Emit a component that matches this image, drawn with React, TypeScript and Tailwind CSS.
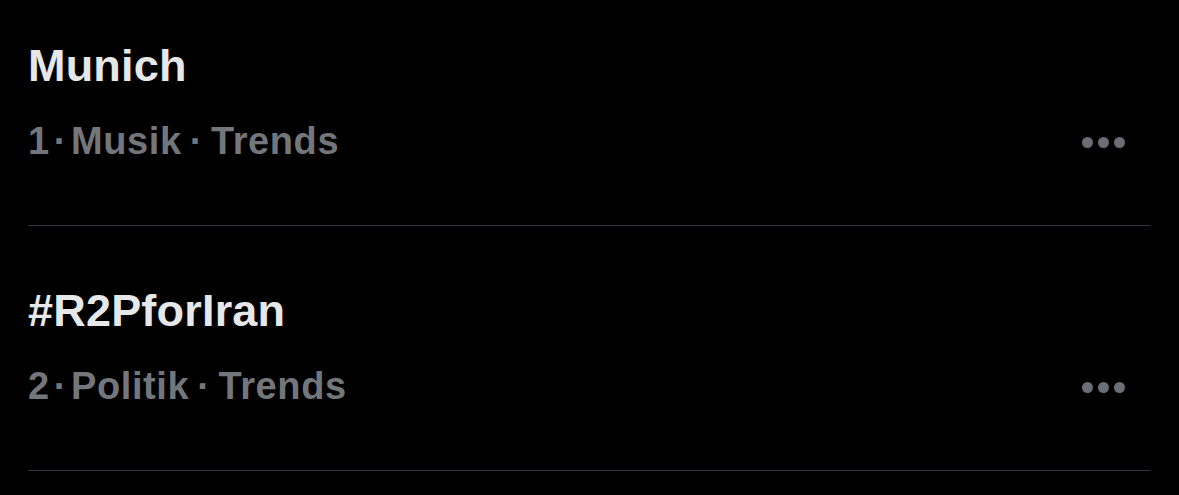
const trends = [
  { title: "Munich", rank: 1, category: "Musik" },
  { title: "#R2PforIran", rank: 2, category: "Politik" },
];

const MoreDots = () => (
  <div className="flex items-center gap-[5px]">
    <span className="w-[11px] h-[11px] rounded-full bg-[#6b6e73]"></span>
    <span className="w-[11px] h-[11px] rounded-full bg-[#6b6e73]"></span>
    <span className="w-[11px] h-[11px] rounded-full bg-[#6b6e73]"></span>
  </div>
);

const App = () => {
  return (
    <div
      className="min-h-screen w-full bg-black px-[28px]"
      style={{ fontFamily: '"Liberation Sans", Arial, sans-serif' }}
    >
      {trends.map((t, i) => (
        <div
          key={t.title}
          className={`border-b border-[#34343b] pb-[62px] ${i === 0 ? "pt-[40px]" : "pt-[59px]"}`}
        >
          <div className="text-[45px] leading-[52px] font-bold text-[#e6e7e8] tracking-[0.2px]">
            {t.title}
          </div>
          <div className="mt-[27px] flex items-center justify-between">
            <div className="text-[38px] leading-[44px] font-bold text-[#73777c] tracking-[0.6px]">
              {t.rank}
              <span className="mx-[4px]">·</span>
              {t.category}
              <span className="mx-[8px]">·</span>
              Trends
            </div>
            <div className="pr-[26px] pt-[2px]">
              <MoreDots />
            </div>
          </div>
        </div>
      ))}
    </div>
  );
};

export default App;
